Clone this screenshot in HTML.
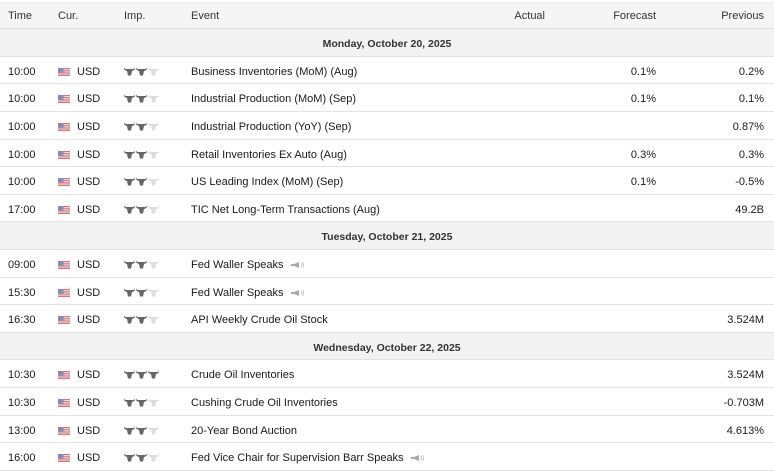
<!DOCTYPE html>
<html><head><style>
body{margin:0;width:774px;height:465px;overflow:hidden;background:#fff;font-family:"Liberation Sans",Arial,sans-serif;font-size:11px;color:#1a1a1a}
.hd{position:absolute;left:0;top:2px;width:774px;height:27px;background:#f5f5f5;border-bottom:1px solid #ddd;border-top:1px solid #eee;box-sizing:border-box;color:#333}
.r{position:absolute;left:0;width:774px;height:27.6px;box-sizing:border-box;border-bottom:1px solid #e3e3e3}
.d{background:#f2f2f2;text-align:center;font-weight:bold;color:#333;font-size:10.5px}
.c{position:absolute;top:0;line-height:30px}
.t{left:8px}.f{left:58px;top:11px;width:12px;height:8px}.u{left:77px}.i{left:124px;top:10px}.e{left:191px}
.a{right:229px;text-align:right}.fc{right:118px;text-align:right}.p{right:10px;text-align:right}
.hd .c{line-height:26px}
</style></head><body>
<svg width="0" height="0" style="position:absolute"><defs>
<symbol id="b" viewBox="0 0 11 9"><path d="M0 0.5 L1.5 2 L9.5 2 L11 0.5 L10.5 3 L8 4 L7 8.5 L4 8.5 L3 4 L0.5 3Z"/></symbol>
<symbol id="fl" viewBox="0 0 12 8"><rect width="12" height="8" fill="#d8737c"/><rect y="1.2" width="12" height="1" fill="#f3e6e8"/><rect y="3.4" width="12" height="1" fill="#f3e6e8"/><rect y="5.6" width="12" height="1" fill="#f3e6e8"/><rect width="5.5" height="4.4" fill="#7f8cc0"/></symbol>
<symbol id="sp" viewBox="0 0 14 8"><path d="M1 3h3l5-2v6l-5-2H1z" fill="#aaa"/><path d="M11 2q1.5 2 0 4M12.5 1q2 3 0 6" stroke="#bbb" fill="none" stroke-width=".8"/></symbol>
</defs></svg>
<div class="hd"><span class="c t">Time</span><span class="c u" style="left:58px">Cur.</span><span class="c" style="left:124px">Imp.</span><span class="c e">Event</span><span class="c a">Actual</span><span class="c fc">Forecast</span><span class="c p">Previous</span></div>
<div id="rows"></div>
<script>
const R=[["D","Monday, October 20, 2025"],
["10:00",2,"Business Inventories (MoM) (Aug)","","0.1%","0.2%"],
["10:00",2,"Industrial Production (MoM) (Sep)","","0.1%","0.1%"],
["10:00",2,"Industrial Production (YoY) (Sep)","","","0.87%"],
["10:00",2,"Retail Inventories Ex Auto (Aug)","","0.3%","0.3%"],
["10:00",2,"US Leading Index (MoM) (Sep)","","0.1%","-0.5%"],
["17:00",2,"TIC Net Long-Term Transactions (Aug)","","","49.2B"],
["D","Tuesday, October 21, 2025"],
["09:00",2,"Fed Waller Speaks","","","",1],
["15:30",2,"Fed Waller Speaks","","","",1],
["16:30",2,"API Weekly Crude Oil Stock","","","3.524M"],
["D","Wednesday, October 22, 2025"],
["10:30",3,"Crude Oil Inventories","","","3.524M"],
["10:30",2,"Cushing Crude Oil Inventories","","","-0.703M"],
["13:00",2,"20-Year Bond Auction","","","4.613%"],
["16:00",2,"Fed Vice Chair for Supervision Barr Speaks","","","",1]];
let h="";R.forEach((r,k)=>{const top=29.2+k*27.6;
if(r[0]=="D"){h+=`<div class="r d" style="top:${top}px;line-height:30px">${r[1]}</div>`;return}
let bulls="";for(let j=0;j<3;j++)bulls+=`<svg width="11" height="9" style="margin-right:1px;fill:${j<r[1]?'#666':'#dedede'}"><use href="#b"/></svg>`;
h+=`<div class="r" style="top:${top}px"><span class="c t">${r[0]}</span><svg class="c f"><use href="#fl"/></svg><span class="c u">USD</span><span class="c i" style="line-height:0">${bulls}</span><span class="c e">${r[2]}${r[6]?' <svg width="14" height="8" style="margin-left:3px;vertical-align:-1px"><use href="#sp"/></svg>':''}</span><span class="c a">${r[3]}</span><span class="c fc">${r[4]}</span><span class="c p">${r[5]}</span></div>`});
document.getElementById("rows").innerHTML=h;
</script>
</body></html>
